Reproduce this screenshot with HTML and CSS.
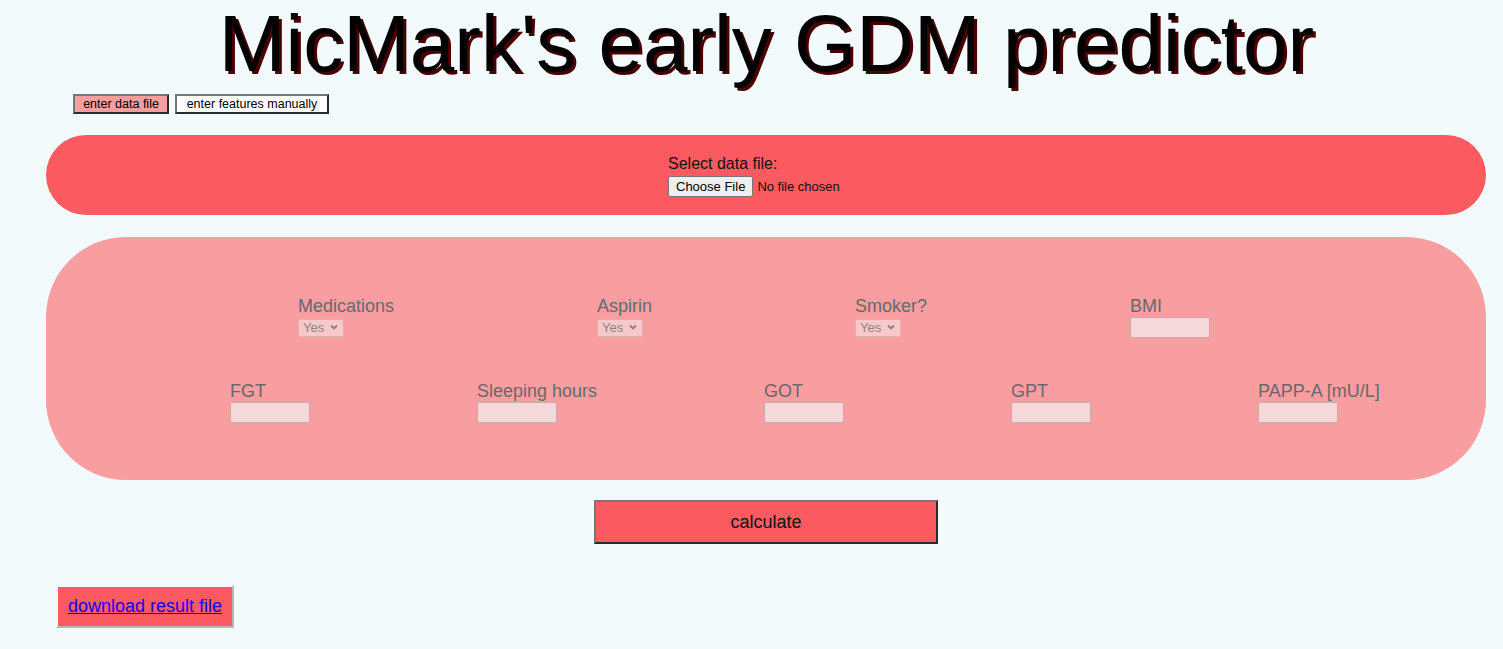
FILE: index.html
```html
<!DOCTYPE html>
<html>
<head>
<meta charset="utf-8">
<link rel="stylesheet" href="styles.css">
</head>
<body>
<div class="page">
  <h1 class="title">MicMark's early GDM predictor</h1>
  <div class="tabs">
    <button class="tab tab-active tab-file">enter data file</button>
    <button class="tab tab-manual">enter features manually</button>
  </div>
  <div class="content">
    <section class="panel panel-file">
      <div class="file-box">
        <div class="file-label">Select data file:</div>
        <input type="file" class="file-input">
      </div>
    </section>
    <section class="panel panel-manual">
      <div class="row row-1">
        <div class="field">
          <label>Medications</label>
          <span class="sel"><select disabled><option>Yes</option></select><svg class="chev" width="8" height="6" viewBox="0 0 8 6"><path d="M1 1.5 L4 4.5 L7 1.5" fill="none" stroke="#8d7d7e" stroke-width="1.8"/></svg></span>
        </div>
        <div class="field">
          <label>Aspirin</label>
          <span class="sel"><select disabled><option>Yes</option></select><svg class="chev" width="8" height="6" viewBox="0 0 8 6"><path d="M1 1.5 L4 4.5 L7 1.5" fill="none" stroke="#8d7d7e" stroke-width="1.8"/></svg></span>
        </div>
        <div class="field">
          <label>Smoker?</label>
          <span class="sel"><select disabled><option>Yes</option></select><svg class="chev" width="8" height="6" viewBox="0 0 8 6"><path d="M1 1.5 L4 4.5 L7 1.5" fill="none" stroke="#8d7d7e" stroke-width="1.8"/></svg></span>
        </div>
        <div class="field">
          <label>BMI</label>
          <input type="text" class="num" disabled>
        </div>
      </div>
      <div class="row row-2">
        <div class="field">
          <label>FGT</label>
          <input type="text" class="num" disabled>
        </div>
        <div class="field">
          <label>Sleeping hours</label>
          <input type="text" class="num" disabled>
        </div>
        <div class="field">
          <label>GOT</label>
          <input type="text" class="num" disabled>
        </div>
        <div class="field">
          <label>GPT</label>
          <input type="text" class="num" disabled>
        </div>
        <div class="field">
          <label>PAPP-A [mU/L]</label>
          <input type="text" class="num" disabled>
        </div>
      </div>
    </section>
    <div class="calc-wrap">
      <button class="calc">calculate</button>
    </div>
  </div>
  <div class="download">
    <a href="#" class="download-link">download result file</a>
  </div>
</div>
</body>
</html>
```
FILE: styles.css
```css
html, body {
  margin: 0;
  padding: 0;
  background: #f3fafc;
}
body {
  font-family: "Liberation Sans", Arial, sans-serif;
  color: #000;
}
.page {
  width: 1503px;
}
.title {
  margin: 0;
  padding-top: 4px;
  font-size: 80px;
  line-height: 80px;
  font-weight: normal;
  text-align: center;
  padding-left: 30px;
  text-shadow: 3px 3px 0 #4a0000;
}
.tabs {
  display: flex;
  gap: 6px;
  margin-top: 10px;
  padding-left: 73px;
}
.tab {
  box-sizing: border-box;
  font-family: "Liberation Sans", Arial, sans-serif;
  font-size: 12.5px;
  height: 20px;
  padding: 0;
  background: #fff;
  color: #000;
  border: 2px solid;
  border-color: #767676 #2b2b2b #2b2b2b #767676;
  line-height: 15px;
  text-align: center;
}
.tab-file {
  width: 96px;
}
.tab-manual {
  width: 154px;
}
.tab-active {
  background: #f89ea1;
}
.content {
  padding-left: 46px;
  padding-right: 17px;
  margin-top: 21px;
}
.panel {
  box-sizing: border-box;
}
.panel-file {
  background: #fc5a61;
  height: 80px;
  border-radius: 40px;
  display: flex;
  justify-content: center;
  padding-top: 19px;
}
.file-box {
  text-align: left;
  width: 196px;
}
.file-label {
  font-size: 16px;
  line-height: 20px;
  color: #111;
}
.file-input {
  font-family: "Liberation Sans", Arial, sans-serif;
  font-size: 13px;
  margin-top: 2px;
  color: #111;
}
.panel-manual {
  margin-top: 22px;
  background: #f89ea1;
  height: 243px;
  border-radius: 80px;
  padding-top: 59px;
  color: #67696a;
}
.row {
  display: flex;
  align-items: flex-start;
}
.row-1 {
  margin-left: 252px;
  gap: 203px;
}
.row-2 {
  margin-left: 184px;
  gap: 167px;
  margin-top: 43px;
}
.field {
  display: flex;
  flex-direction: column;
  align-items: flex-start;
}
.field label {
  font-size: 18px;
  line-height: 21px;
  white-space: nowrap;
}
.num {
  box-sizing: border-box;
  width: 80px;
  height: 21px;
  margin-top: 0;
  background: #f5d9da;
  border: 1px solid #c9a9aa;
  border-radius: 2px;
  padding: 0;
}
.sel {
  position: relative;
  display: inline-block;
  margin-top: 1px;
}
.sel select {
  appearance: none;
  -webkit-appearance: none;
  box-sizing: border-box;
  width: 46px;
  height: 18px;
  font-family: "Liberation Sans", Arial, sans-serif;
  font-size: 13px;
  line-height: 16px;
  padding: 0 0 0 4px;
  background: #f9c8ca;
  color: #8c8384;
  border: 1px solid #dfb1b3;
  border-radius: 2px;
  opacity: 1;
}
.chev {
  position: absolute;
  right: 6px;
  top: 6px;
}
.calc-wrap {
  display: flex;
  justify-content: center;
  margin-top: 20px;
}
.calc {
  box-sizing: border-box;
  width: 344px;
  height: 44px;
  background: #fc5a61;
  font-family: "Liberation Sans", Arial, sans-serif;
  font-size: 18px;
  color: #111;
  border: 2px solid;
  border-color: #767676 #2b2b2b #2b2b2b #767676;
}
.download {
  margin-top: 41px;
  padding-left: 56px;
}
.download-link {
  display: inline-block;
  box-sizing: border-box;
  height: 43px;
  padding: 9px 10px 0 10px;
  background: #fc5a61;
  color: #1400f0;
  font-size: 18px;
  line-height: 21px;
  border: 2px solid;
  border-color: #f6f6f6 #b5b5b5 #b5b5b5 #f6f6f6;
}
```
